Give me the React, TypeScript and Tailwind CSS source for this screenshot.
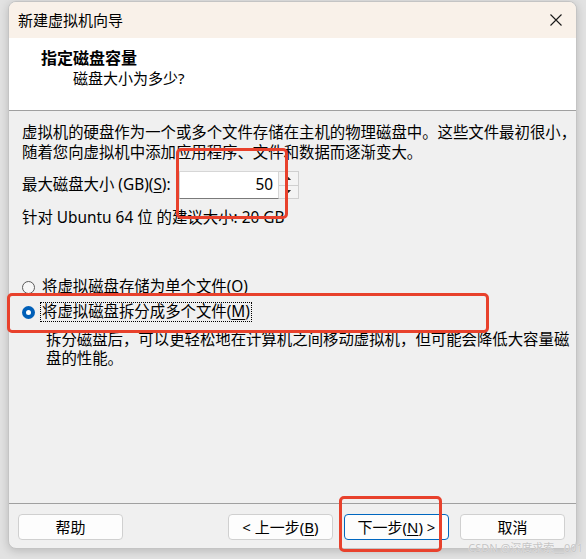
import React from 'react';

const FONT = '"Segoe UI", "Noto Sans", "Noto Sans CJK SC", sans-serif';

const Key: React.FC<{ k: string }> = ({ k }) => <span className="underline underline-offset-2">{k}</span>;

const CloseIcon: React.FC = () => (
  <svg width="12" height="12" viewBox="0 0 12 12" aria-hidden="true">
    <path d="M0.5 0.5 L11.5 11.5 M11.5 0.5 L0.5 11.5" stroke="#1a1a1a" strokeWidth="1.1" />
  </svg>
);

const Button: React.FC<{ children: React.ReactNode; primary?: boolean }> = ({ children, primary }) => (
  <button
    className={`w-[105px] h-[26px] rounded-[4px] bg-[#fdfdfd] text-[15px] text-black flex items-center justify-center ${
      primary ? 'border border-[#0067c0]' : 'border border-[#d0d0d0]'
    }`}
  >
    {children}
  </button>
);

const Radio: React.FC<{ checked?: boolean }> = ({ checked }) =>
  checked ? (
    <span className="w-[13px] h-[13px] rounded-full bg-[#005fb8] flex items-center justify-center shrink-0">
      <span className="w-[5px] h-[5px] rounded-full bg-white" />
    </span>
  ) : (
    <span className="w-[13px] h-[13px] rounded-full border border-[#5a5a5a] bg-[#f7f7f7] shrink-0" />
  );

export default function App() {
  return (
    <div className="relative w-[586px] h-[559px] bg-[#e2e2e2] overflow-hidden" style={{ fontFamily: FONT }}>
      <div className="ml-[8px] mt-[1px] w-[569px] h-[548px] rounded-[8px] border border-[#c4c4c4] shadow-[0_2px_10px_rgba(0,0,0,0.18)] flex flex-col overflow-hidden bg-[#f0f0f0]">
        {/* title bar */}
        <div className="h-[36px] bg-[#f9f1e9] flex items-center justify-between pl-[9px] pr-[14px] shrink-0">
          <span className="text-[15px] text-black">新建虚拟机向导</span>
          <CloseIcon />
        </div>

        {/* header */}
        <div className="h-[73px] bg-white border-b border-[#a0a0a0] pt-[10px] shrink-0">
          <div className="pl-[32px] text-[16px] leading-[20px] font-bold text-black">指定磁盘容量</div>
          <div className="pl-[64px] text-[15px] leading-[20px] text-black">磁盘大小为多少?</div>
        </div>

        {/* body */}
        <div className="flex-1 pl-[13px] pt-[12px] text-[15.4px] text-black">
          <div className="leading-[20px] whitespace-nowrap">虚拟机的硬盘作为一个或多个文件存储在主机的物理磁盘中。这些文件最初很小，</div>
          <div className="leading-[20px] whitespace-nowrap">随着您向虚拟机中添加应用程序、文件和数据而逐渐变大。</div>

          <div className="mt-[8px] flex items-center h-[28px]">
            <span className="w-[157px] whitespace-nowrap">
              最大磁盘大小 (GB)(<Key k="S" />):
            </span>
            <div className="w-[100px] h-[28px] bg-white border border-[#d6d6d6] border-b-[#7a7a7a] flex items-center justify-end pr-[5px]">
              50
            </div>
            <div className="w-[20px] h-[28px] border border-l-0 border-[#cfcfcf] bg-[#f3f3f3] flex flex-col">
              <div className="flex-1 flex items-center justify-center border-b border-[#cfcfcf]">
                <svg width="5" height="3" viewBox="0 0 5 3"><path d="M0 3 L2.5 0 L5 3 Z" fill="#222" /></svg>
              </div>
              <div className="flex-1 flex items-center justify-center">
                <svg width="5" height="3" viewBox="0 0 5 3"><path d="M0 0 L2.5 3 L5 0 Z" fill="#222" /></svg>
              </div>
            </div>
          </div>

          <div className="mt-[9px] leading-[20px] whitespace-nowrap">针对 Ubuntu 64 位 的建议大小: 20 GB</div>

          <div className="mt-[49px] flex items-center h-[20px]">
            <Radio />
            <span className="ml-[7px] whitespace-nowrap">
              将虚拟磁盘存储为单个文件(<Key k="O" />)
            </span>
          </div>
          <div className="mt-[5px] flex items-center h-[20px]">
            <Radio checked />
            <span className="ml-[5px] px-[1px] h-[20px] flex items-center border border-dotted border-black whitespace-nowrap">
              将虚拟磁盘拆分成多个文件(<Key k="M" />)
            </span>
          </div>
          <div className="mt-[8px] pl-[24px]">
            <div className="leading-[19px] whitespace-nowrap">拆分磁盘后，可以更轻松地在计算机之间移动虚拟机，但可能会降低大容量磁</div>
            <div className="leading-[19px] whitespace-nowrap">盘的性能。</div>
          </div>
        </div>

        {/* footer */}
        <div className="h-[45px] border-t border-[#a0a0a0] pt-[10px] pl-[9px] pr-[11px] flex items-start shrink-0">
          <Button>帮助</Button>
          <div className="ml-auto flex gap-[11px]">
            <Button>
              &lt; 上一步(<Key k="B" />)
            </Button>
            <Button primary>
              下一步(<Key k="N" />) &gt;
            </Button>
            <Button>取消</Button>
          </div>
        </div>
      </div>

      {/* red annotation boxes */}
      <div className="absolute left-[176px] top-[148px] w-[112px] h-[71px] border-[3px] border-[#e8412c] rounded-[5px]" />
      <div className="absolute left-[7px] top-[293px] w-[482px] h-[40px] border-[3px] border-[#e8412c] rounded-[5px]" />
      <div className="absolute left-[339px] top-[496px] w-[103px] h-[56px] border-[3px] border-[#e8412c] rounded-[5px]" />

      {/* watermark */}
      <div className="absolute right-[3px] top-[541px] text-[11px] leading-[14px] text-[#c4c4c4] whitespace-nowrap" style={{ textShadow: '0 0 1px #fff' }}>
        CSDN @深度求索__001
      </div>
    </div>
  );
}
